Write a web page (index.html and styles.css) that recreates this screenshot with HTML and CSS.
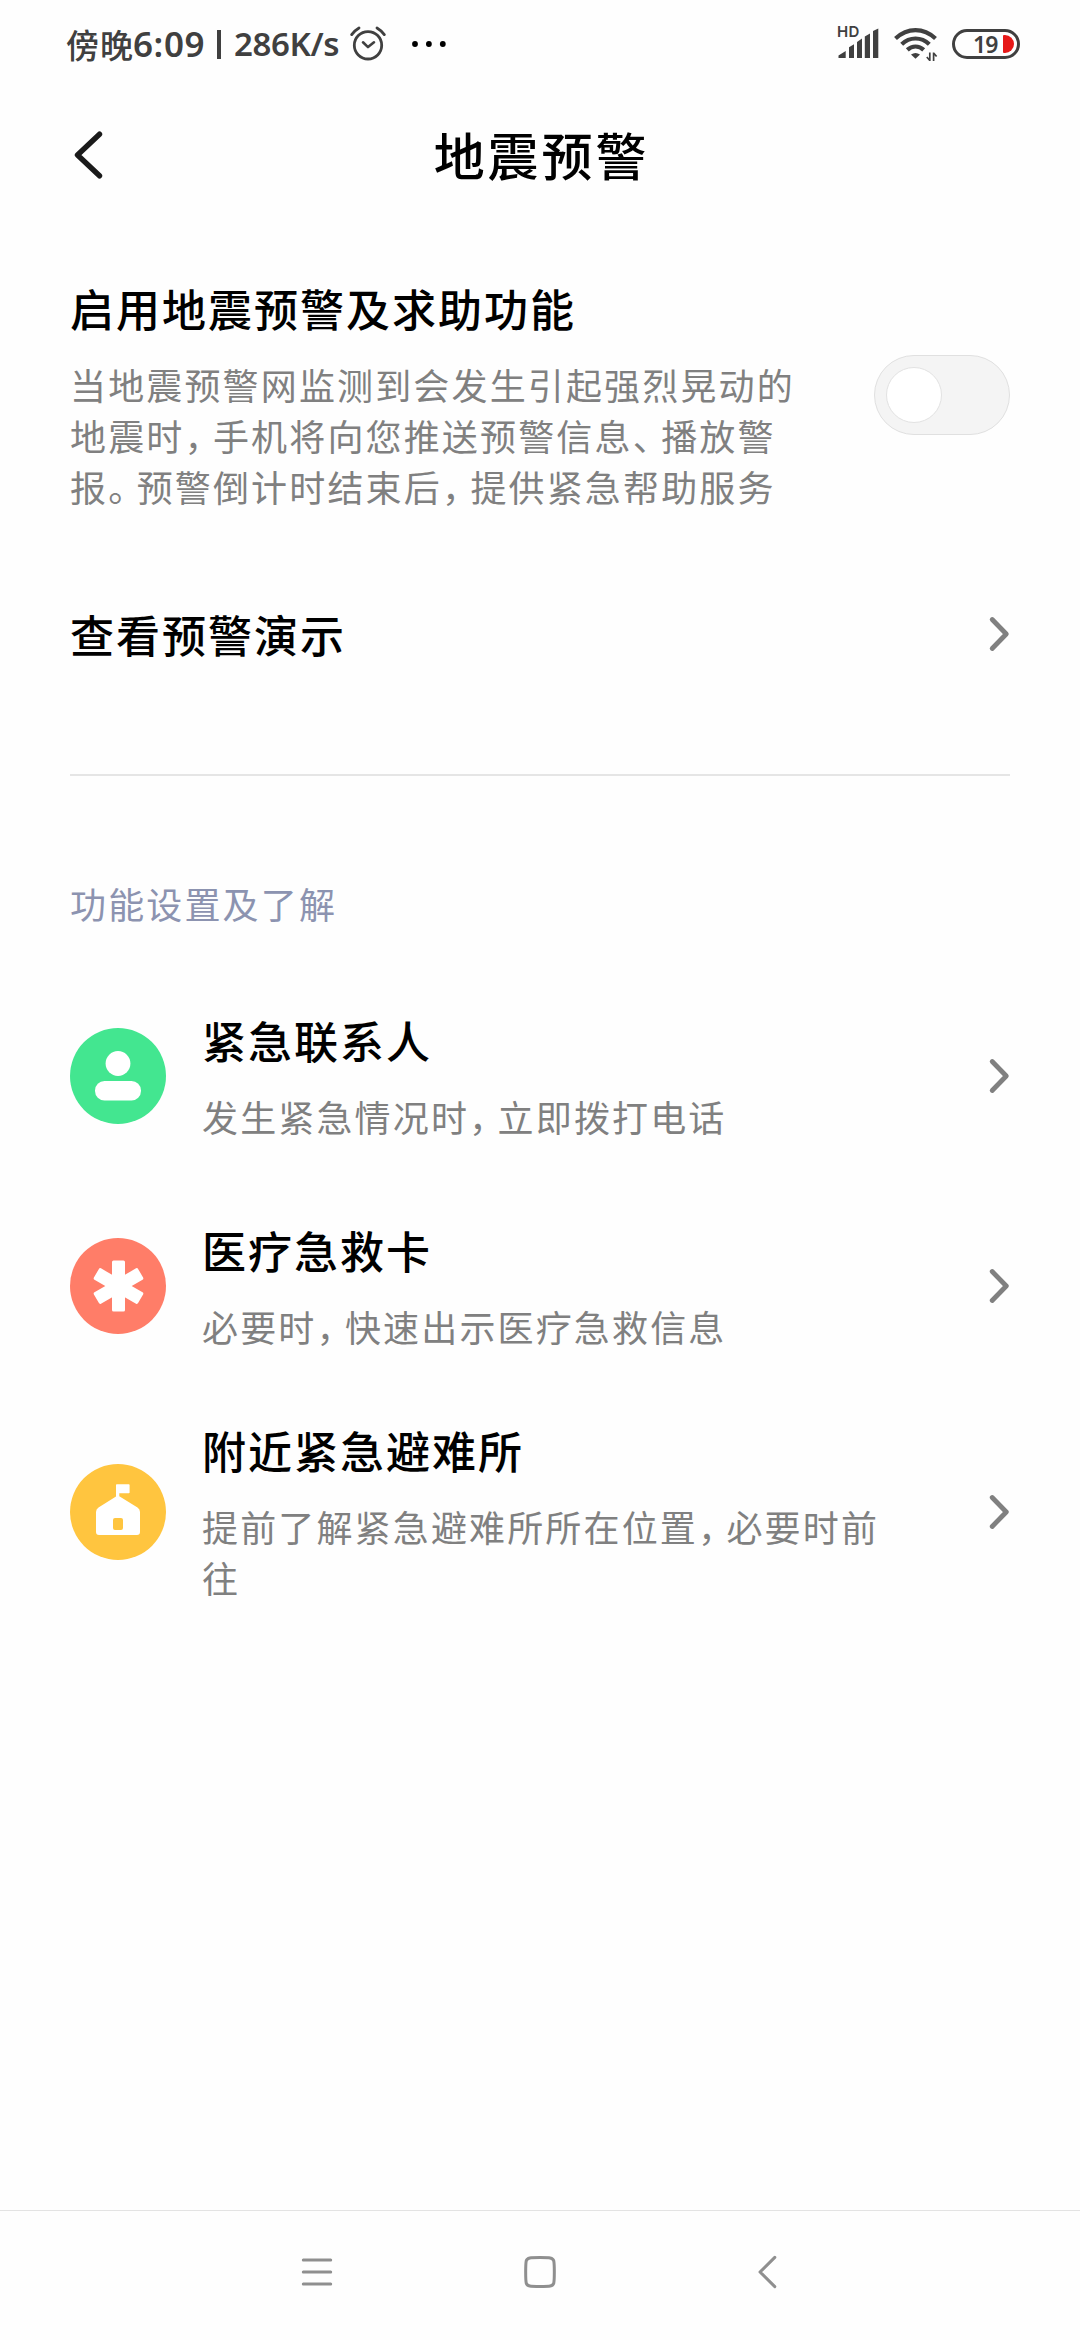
FILE: index.html
```html
<!DOCTYPE html>
<html lang="zh-CN">
<head>
<meta charset="utf-8">
<title>地震预警</title>
<link rel="stylesheet" href="styles.css">
</head>
<body>
<div class="screen">
  <div class="status">
    <div class="status-left">
      <span class="period">傍晚</span><span class="time">6:09</span><span class="bar"></span><span class="speed">286K/s</span>
      <svg class="alarm" width="36" height="36" viewBox="0 0 36 36" fill="none" stroke="#404040" stroke-width="2.8" stroke-linecap="round" stroke-linejoin="round">
        <circle cx="18" cy="19.3" r="13.7"/>
        <path d="M13 16.3l5 4.8 6-4.8" stroke-width="2.6"/>
        <path d="M1.7 8.600Q4.600 4.600 9 2M34.300 8.600Q31.400 4.600 27 2"/>
      </svg>
      <svg class="dots" width="36" height="8" viewBox="0 0 36 8"><circle cx="4" cy="4" r="2.900"/><circle cx="17.900" cy="4" r="2.900"/><circle cx="31.800" cy="4" r="2.900"/></svg>
    </div>
    <div class="status-right">
      <div class="cell">
        <span class="hd">HD</span>
        <svg width="42" height="32" viewBox="0 0 42 32" fill="#404040"><path d="M.5 30v-2.500L7.700 23v7zM11 30V19.300l5-3V30zM19 30V14l5-3.500V30zM26.800 30V8.500l5.200-3V30zM35 30V3l5.300-2.500V30z"/></svg>
      </div>
      <svg class="wifi" width="44" height="36" viewBox="0 0 44 36" fill="none" stroke="#404040" stroke-width="4.200">
        <path d="M1.500 12.500Q10.500 4.100 21.500 4.100T41.500 12.500"/>
        <path d="M7.700 18.200Q13.700 12.500 21.500 12.500T35.300 18.200"/>
        <path d="M13.300 23.900Q16.900 20.500 21.500 20.500T29.700 23.900"/>
        <path d="M17 28.500Q21.500 25.300 26 28.500L21.500 32.700z" fill="#404040" stroke="none"/>
        <path d="M35.800 26.500v8.500M39.600 26.500V35M35.800 34.500l-3-3.500M39.600 27l3 3.500" stroke-width="1.700"/>
      </svg>
      <div class="battery"><span class="level">19</span><span class="charge"></span></div>
    </div>
  </div>

  <header class="header">
    <svg class="back" width="32" height="50" viewBox="0 0 32 50" fill="none" stroke="#1a1a1a" stroke-width="5.400" stroke-linecap="round" stroke-linejoin="round"><path d="M28.500 4.200L6.500 25l22 20.800"/></svg>
    <h1>地震预警</h1>
  </header>

  <main>
    <section class="enable">
      <div class="text">
        <h2>启用地震预警及求助功能</h2>
        <p>当地震预警网监测到会发生引起强烈晃动的<br>地震时<i>，</i>手机将向您推送预警信息<i>、</i>播放警<br>报<i>。</i>预警倒计时结束后<i>，</i>提供紧急帮助服务</p>
      </div>
      <div class="toggle"><span class="knob"></span></div>
    </section>

    <section class="demo">
      <h2>查看预警演示</h2>
      <svg class="chevron" width="22" height="36" viewBox="0 0 22 36"><path d="M4.200 3.500L18.300 18 4.200 32.500"/></svg>
    </section>

    <h3 class="label">功能设置及了解</h3>

    <section class="item">
      <svg class="icon" width="96" height="96" viewBox="0 0 96 96"><circle cx="48" cy="48" r="48" fill="#43e690"/><circle cx="48" cy="35.500" r="12.400" fill="#fff"/><rect x="25" y="53" width="46" height="19.600" rx="9.500" fill="#fff"/></svg>
      <div class="text">
        <h2>紧急联系人</h2>
        <p>发生紧急情况时<i>，</i>立即拨打电话</p>
      </div>
      <svg class="chevron" width="22" height="36" viewBox="0 0 22 36"><path d="M4.200 3.500L18.300 18 4.200 32.500"/></svg>
    </section>

    <section class="item">
      <svg class="icon" width="96" height="96" viewBox="0 0 96 96"><circle cx="48" cy="48" r="48" fill="#ff7d68"/><g fill="#fff"><rect x="42" y="22.500" width="13" height="51" rx="1.500"/><rect x="42" y="22.500" width="13" height="51" rx="1.500" transform="rotate(60 48.500 48)"/><rect x="42" y="22.500" width="13" height="51" rx="1.500" transform="rotate(-60 48.500 48)"/></g></svg>
      <div class="text">
        <h2>医疗急救卡</h2>
        <p>必要时<i>，</i>快速出示医疗急救信息</p>
      </div>
      <svg class="chevron" width="22" height="36" viewBox="0 0 22 36"><path d="M4.200 3.500L18.300 18 4.200 32.500"/></svg>
    </section>

    <section class="item">
      <svg class="icon" width="96" height="96" viewBox="0 0 96 96"><circle cx="48" cy="48" r="48" fill="#ffc53f"/><path fill="#fff" fill-rule="evenodd" d="M46 21q0-.800.800-.800h12q.800 0 .800.800v7.500q0 .800-.800.800h-9.500v3L67.500 43.500Q70 45 70 48v20q0 3-3 3H29q-3 0-3-3V48q0-3 2.500-4.500L46 32.500zM45 54q-2 0-2 2v8q0 2 2 2h6q2 0 2-2v-8q0-2-2-2z"/></svg>
      <div class="text">
        <h2>附近紧急避难所</h2>
        <p>提前了解紧急避难所所在位置<i>，</i>必要时前<br>往</p>
      </div>
      <svg class="chevron" width="22" height="36" viewBox="0 0 22 36"><path d="M4.200 3.500L18.300 18 4.200 32.500"/></svg>
    </section>
  </main>

  <nav class="nav">
    <svg width="34" height="34" viewBox="0 0 34 34"><path d="M3.300 5h27.400M3.300 17h27.400M3.300 29h27.400"/></svg>
    <svg width="34" height="34" viewBox="0 0 34 34"><path d="M17 2.500c10 0 12.800 0 13.800 3.500.700 4 .700 18 0 22-1 3.500-3.800 3.500-13.800 3.500S4.200 31.500 3.200 28c-.700-4-.700-18 0-22C4.200 2.500 7 2.500 17 2.500z"/></svg>
    <svg width="34" height="34" viewBox="0 0 34 34"><path d="M28.800 2.400L14 17l14.800 14.600"/></svg>
  </nav>
</div>
</body>
</html>
```
FILE: styles.css
```css
* { box-sizing: border-box; margin: 0; padding: 0; }
body { background: #fefefe; font-family: "Noto Sans CJK SC", sans-serif; color: #000; }
svg { display: block; flex: none; }
.screen { width: 1080px; height: 2340px; display: flex; flex-direction: column; overflow: hidden; }

.status { height: 88px; padding: 0 60px 0 66px; display: flex; justify-content: space-between; align-items: center; color: #404040; }
.status-left { display: flex; align-items: center; line-height: 50px; white-space: nowrap; }
.period { width: 67px; font-size: 33px; letter-spacing: 1px; font-weight: 500; }
.time { width: 84px; font: 600 35px/50px "Noto Sans", sans-serif; letter-spacing: 0.6px; }
.bar { width: 4px; height: 29px; background: #404040; margin-right: 13px; }
.speed { width: 116px; font: 600 33px/50px "Noto Sans", sans-serif; letter-spacing: -0.4px; }
.dots { margin-left: 25px; }
.status-right { display: flex; align-items: center; }
.cell { position: relative; margin-right: 14px; }
.hd { position: absolute; left: -1px; top: -4px; font: 600 15px/16px Inter, sans-serif; letter-spacing: 0.3px; }
.wifi { margin-right: 14px; }
.battery { width: 68px; height: 30px; border: 3px solid #404040; border-radius: 15px; display: flex; align-items: center; padding-left: 18px; }
.level { width: 30px; font: 600 23px/24px "Noto Sans", sans-serif; letter-spacing: -1px; }
.charge { width: 11px; height: 18px; background: #e61919; border-radius: 1px 9px 9px 1px; }

.header { height: 134px; display: grid; grid-template-columns: 148px 1fr 148px; align-items: center; }
.back { margin-left: 71px; }
h1 { font-size: 51px; line-height: 70px; font-weight: 500; letter-spacing: 2.900px; text-align: center; padding: 0 0 3px 3px; }

main { padding: 0 70px; flex: 1; }
h2 { font-size: 44px; line-height: 60px; font-weight: 500; letter-spacing: 2px; white-space: nowrap; }
p { font-size: 36px; line-height: 51px; letter-spacing: 2.150px; color: #808080; margin-top: 21px; white-space: nowrap; }
i { font-style: normal; letter-spacing: -7.500px; }
.enable { height: 345px; display: flex; justify-content: space-between; align-items: center; }
.toggle { width: 136px; height: 80px; border: 1px solid #e0e0e0; border-radius: 40px; background: #f4f4f4; padding: 11px; }
.knob { display: block; width: 56px; height: 56px; border: 1px solid #e2e2e2; border-radius: 50%; background: #fff; }
.demo { height: 209px; padding-bottom: 73px; border-bottom: 2px solid #e5e5e5; display: flex; justify-content: space-between; align-items: center; }
.chevron { fill: none; stroke: #808080; stroke-width: 4.800; stroke-linecap: round; stroke-linejoin: round; }
.label { margin: 97px 0 38px; height: 60px; font-size: 36px; line-height: 60px; font-weight: 400; letter-spacing: 2.150px; color: #8c93b0; }
.item { min-height: 210px; padding: 29px 0; display: flex; align-items: center; }
.item .text { flex: 1; margin-left: 36px; }

.nav { height: 130px; border-top: 1px solid #e3e3e3; padding: 0 300px 8px; display: flex; justify-content: space-between; align-items: center; }
.nav svg { fill: none; stroke: #8f8f8f; stroke-width: 3; stroke-linecap: round; stroke-linejoin: round; }
```
